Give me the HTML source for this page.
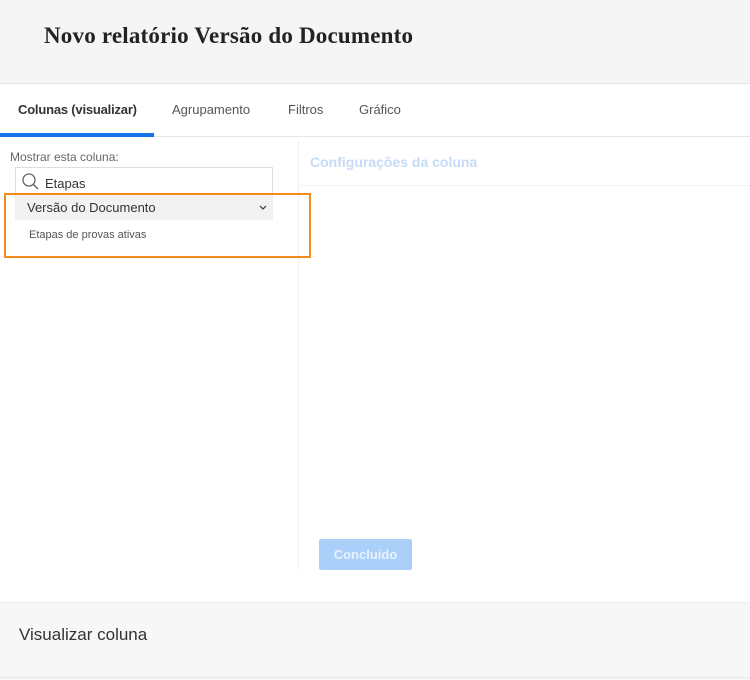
<!DOCTYPE html>
<html><head><meta charset="utf-8"><style>
*{margin:0;padding:0;box-sizing:border-box}
body{width:750px;height:680px;background:#fff;font-family:"Liberation Sans",sans-serif;position:relative;overflow:hidden}
.abs{position:absolute}
</style></head><body>
<div class="abs" style="left:0;top:0;width:750px;height:84px;background:#f5f5f5;border-bottom:1px solid #e6e6e6"></div>
<div class="abs" style="left:44px;top:23px;font-family:'Liberation Serif',serif;font-weight:bold;font-size:23px;letter-spacing:0.2px;color:#222">Novo relatório Versão do Documento</div>
<div class="abs" style="left:0;top:136px;width:750px;height:1px;background:#e6e6e6"></div>
<div class="abs" style="left:18px;top:102px;font-size:13px;font-weight:bold;color:#333;letter-spacing:-0.2px">Colunas (visualizar)</div>
<div class="abs" style="left:0;top:133px;width:154px;height:4px;background:#1473e6"></div>
<div class="abs" style="left:172px;top:102px;font-size:13px;color:#555">Agrupamento</div>
<div class="abs" style="left:288px;top:102px;font-size:13px;color:#555">Filtros</div>
<div class="abs" style="left:359px;top:102px;font-size:13px;color:#555">Gráfico</div>
<div class="abs" style="left:298px;top:140px;width:1px;height:430px;background:#f0f0f0"></div>
<div class="abs" style="left:10px;top:150px;font-size:12px;color:#666">Mostrar esta coluna:</div>
<div class="abs" style="left:15px;top:167px;width:258px;height:30px;border:1px solid #ddd;background:#fff"></div>
<svg class="abs" style="left:21px;top:172px" width="20" height="20" viewBox="0 0 20 20"><circle cx="8" cy="8" r="6" fill="none" stroke="#666" stroke-width="1.3"/><path d="M12.5 12.5L17 17" stroke="#666" stroke-width="1.5"/></svg>
<div class="abs" style="left:45px;top:176px;font-size:13px;color:#333">Etapas</div>
<div class="abs" style="left:15px;top:195px;width:258px;height:25px;background:#f2f2f2"></div>
<div class="abs" style="left:27px;top:200px;font-size:13px;color:#333">Versão do Documento</div>
<svg class="abs" style="left:258px;top:204px" width="10" height="8" viewBox="0 0 10 8"><path d="M2 2L5 5L8 2" fill="none" stroke="#444" stroke-width="1.3"/></svg>
<div class="abs" style="left:29px;top:229px;font-size:11px;color:#555">Etapas de provas ativas</div>
<div class="abs" style="left:4px;top:193px;width:307px;height:65px;border:2px solid #f28c1e"></div>
<div class="abs" style="left:310px;top:154px;font-size:14px;font-weight:bold;color:#c5daf5">Configurações da coluna</div>
<div class="abs" style="left:299px;top:185px;width:451px;height:1px;background:#f2f2f2"></div>
<div class="abs" style="left:319px;top:539px;width:93px;height:31px;background:#aad0fa;border-radius:2px;color:#e8f2fe;font-size:13px;font-weight:bold;text-align:center;line-height:31px">Concluído</div>
<div class="abs" style="left:0;top:602px;width:750px;height:78px;background:#f7f7f7;border-top:1px solid #eee"></div>
<div class="abs" style="left:0;top:677px;width:750px;height:1px;background:#e8e8e8"></div>
<div class="abs" style="left:19px;top:625px;font-size:17px;color:#333">Visualizar coluna</div>
</body></html>
